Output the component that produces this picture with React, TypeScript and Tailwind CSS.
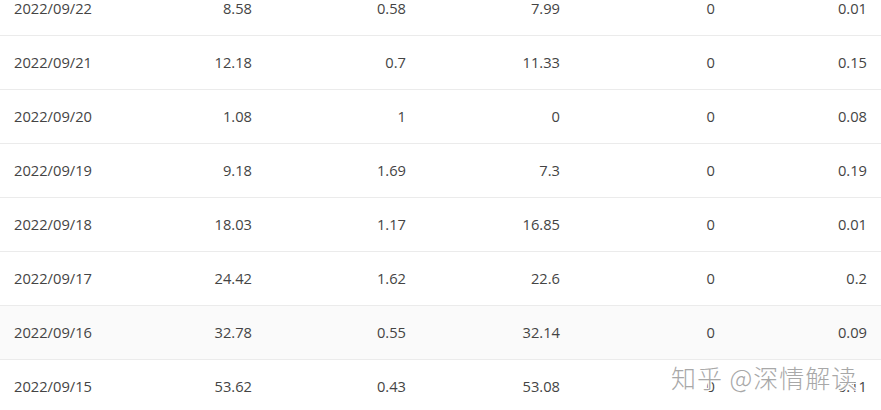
const rows = [
  ['2022/09/22', '8.58', '0.58', '7.99', '0', '0.01'],
  ['2022/09/21', '12.18', '0.7', '11.33', '0', '0.15'],
  ['2022/09/20', '1.08', '1', '0', '0', '0.08'],
  ['2022/09/19', '9.18', '1.69', '7.3', '0', '0.19'],
  ['2022/09/18', '18.03', '1.17', '16.85', '0', '0.01'],
  ['2022/09/17', '24.42', '1.62', '22.6', '0', '0.2'],
  ['2022/09/16', '32.78', '0.55', '32.14', '0', '0.09'],
  ['2022/09/15', '53.62', '0.43', '53.08', '0', '0.11'],
]

export default function App() {
  return (
    <div
      className="relative w-[881px] h-[410px] overflow-hidden bg-white text-[14.7px] text-[#444]"
      style={{ fontFamily: '"Open Sans", "Liberation Sans", sans-serif' }}
    >
      <div className="mt-[-18px]">
        {rows.map((r, i) => (
          <div
            key={r[0]}
            className={`grid grid-cols-[112px_154px_154px_154px_155px_152px] h-[54px] items-center border-b border-[#ebebeb] ${i === 6 ? 'bg-[#fafafa]' : ''}`}
          >
            <div className="pl-[14px]">{r[0]}</div>
            {r.slice(1).map((v, j) => (
              <div key={j} className="text-right pr-[14px]">{v}</div>
            ))}
          </div>
        ))}
      </div>

      {/* watermark */}
      <div
        className="absolute left-[671px] top-[359px] text-[25px] font-light text-[#a8a8a8] tracking-[1px] whitespace-nowrap"
        style={{
          fontFamily: '"Noto Sans CJK SC", "Noto Sans", sans-serif',
          textShadow: '1px 1px 0 #fff, -1px -1px 0 #fff, 1px -1px 0 #fff, -1px 1px 0 #fff',
        }}
      >
        知乎 @深情解读
      </div>
    </div>
  )
}
